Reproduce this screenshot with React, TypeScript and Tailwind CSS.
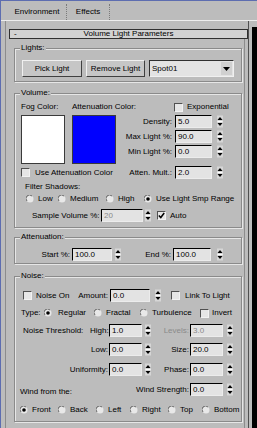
import React from "react";

const Spin = ({ dis = false }: { dis?: boolean }) => (
  <svg width="6" height="13" viewBox="0 0 6 13" className="shrink-0">
    <rect x="0" y="0.5" width="6" height="12" fill="#d6d6d6" />
    <path d="M3 2L5.5 5H0.5Z" fill={dis ? "#555" : "#000"} />
    <path d="M0.5 6.5H5.5" stroke="#fff" strokeWidth="1" />
    <path d="M3 11L5.5 8H0.5Z" fill={dis ? "#555" : "#000"} />
  </svg>
);

const Field = ({ v, w, dis = false }: { v: string; w: string; dis?: boolean }) => (
  <div
    className={`${w} h-[13px] shrink-0 border border-t-black border-l-black border-r-[#ececec] border-b-[#ececec] bg-[#e3e3e3] pl-[2px] leading-[11px] ${
      dis ? "text-[#8a8a8a]" : "text-black"
    }`}
  >
    {v}
  </div>
);

const Check = ({ on = false }: { on?: boolean }) => (
  <div className="w-[9px] h-[9px] shrink-0 border border-t-[#505050] border-l-[#505050] border-r-[#f2f2f2] border-b-[#f2f2f2] bg-[#e6e6e6] flex items-center justify-center">
    {on && (
      <svg width="7" height="7" viewBox="0 0 7 7">
        <path d="M0.8 3.4L2.8 5.5L6.2 1" stroke="#000" strokeWidth="1.5" fill="none" />
      </svg>
    )}
  </div>
);

const Radio = ({ on = false }: { on?: boolean }) => (
  <svg width="8" height="8" viewBox="0 0 8 8" className="shrink-0">
    <circle cx="4" cy="4" r="3.5" fill="#e8e8e8" />
    <path d="M1 6A3.5 3.5 0 0 1 6 1" stroke="#6a6a6a" strokeWidth="1" fill="none" />
    {on && <circle cx="4" cy="4" r="1.8" fill="#000" />}
  </svg>
);

const Group = ({
  label,
  className,
  children,
}: {
  label: string;
  className: string;
  children: React.ReactNode;
}) => (
  <div
    className={`ml-[8px] mr-[2px] border border-[#8a8a8a] shadow-[inset_1px_1px_0_#e6e6e6,1px_1px_0_#e6e6e6] ${className}`}
  >
    <div className="-mt-[6px] ml-[5px] w-fit bg-[#bcbcbc] px-[1px] h-[10px] leading-[10px]">{label}</div>
    {children}
  </div>
);

const Btn = ({ t, w }: { t: string; w: string }) => (
  <div
    className={`${w} h-[17px] shrink-0 flex items-center justify-center border border-t-[#f0f0f0] border-l-[#f0f0f0] border-r-[#404040] border-b-[#404040] bg-[#c6c6c6]`}
  >
    {t}
  </div>
);

const RightNum = ({ label, v, dis = false }: { label: string; v: string; dis?: boolean }) => (
  <div className="flex items-center">
    <span className={`w-[38px] shrink-0 text-right whitespace-nowrap ${dis ? "text-[#8a8a8a]" : ""}`}>{label}</span>
    <div className="ml-[1px]">
      <Field v={v} w="w-[33px]" dis={dis} />
    </div>
    <div className="ml-[4px]">
      <Spin />
    </div>
  </div>
);

const LeftNum = ({ label, v }: { label: string; v: string }) => (
  <div className="flex items-center">
    <span className="w-[93px] shrink-0 text-right">{label}</span>
    <div className="ml-[1px]">
      <Field v={v} w="w-[33px]" />
    </div>
    <div className="ml-[3px]">
      <Spin />
    </div>
  </div>
);

const VolNum = ({ label, v }: { label: string; v: string }) => (
  <div className="flex items-center h-[13px]">
    <span className="w-[49px] shrink-0 text-right whitespace-nowrap">{label}</span>
    <div className="ml-[3px]">
      <Field v={v} w="w-[37px]" />
    </div>
    <div className="ml-[5px]">
      <Spin />
    </div>
  </div>
);

export default function App() {
  return (
    <div className="w-[257px] h-[428px] overflow-hidden bg-[#bcbcbc] border-t border-l border-[#5d6db0] font-['Liberation_Sans',Arial,sans-serif] text-[8px] leading-[10px] text-black">
      {/* tabs */}
      <div className="flex h-[19px] items-end pl-[7px]">
        <div className="w-[59px] h-[16px] flex items-center justify-center border-r border-dotted border-[#7a7a7a]">
          Environment
        </div>
        <div className="w-[43px] h-[16px] flex items-center justify-center border-r border-dotted border-[#7a7a7a]">
          Effects
        </div>
      </div>
      <div className="h-[1px] bg-[#ededed]" />

      <div className="flex">
        <div className="w-[251px]">
          <div className="ml-[4px] w-[244px] h-[407px] border-l border-[#8c8c8c] border-r border-r-[#505050] flex flex-col">
            <div className="ml-[3px] mt-[8px] h-[10px] border border-[#303030] bg-[#d2d2d2] flex items-center">
              <span className="ml-[4px] w-[10px]">-</span>
              <span className="flex-1 text-center pr-[14px]">Volume Light Parameters</span>
            </div>

            <div className="mr-[3px] flex-1 border-r border-[#8c8c8c]">
              {/* Lights */}
              <Group label="Lights:" className="mt-[9px] pb-[4px]">
                <div className="flex mt-[7px] ml-[7px]">
                  <Btn t="Pick Light" w="w-[60px]" />
                  <div className="ml-[4px]">
                    <Btn t="Remove Light" w="w-[59px]" />
                  </div>
                  <div className="ml-[4px] w-[85px] h-[17px] flex items-center border border-t-[#303030] border-l-[#303030] border-r-[#f0f0f0] border-b-[#f0f0f0] bg-[#e3e3e3]">
                    <span className="flex-1 pl-[2px]">Spot01</span>
                    <div className="w-[11px] h-[13px] mr-[1px] flex items-center justify-center bg-[#d0d0d0]">
                      <svg width="7" height="4" viewBox="0 0 7 4">
                        <path d="M0 0H7L3.5 4Z" fill="#000" />
                      </svg>
                    </div>
                  </div>
                </div>
              </Group>

              {/* Volume */}
              <Group label="Volume:" className="mt-[11px] pb-[5px]">
                <div className="flex mt-[4px]">
                  <div className="ml-[6px] w-[102px] shrink-0">
                    <div className="flex h-[10px] items-center">
                      <span className="w-[51px] shrink-0">Fog Color:</span>
                      <span className="whitespace-nowrap">Attenuation Color:</span>
                    </div>
                    <div className="flex mt-[3px]">
                      <div className="w-[44px] h-[49px] shrink-0 bg-white border border-[#3a3a3a]" />
                      <div className="ml-[7px] w-[44px] h-[49px] shrink-0 bg-[#0000ff] border border-[#3a3a3a]" />
                    </div>
                  </div>
                  <div>
                    <div className="flex h-[10px] items-center ml-[51px]">
                      <Check />
                      <span className="ml-[4px]">Exponential</span>
                    </div>
                    <div className="mt-[3px]">
                      <VolNum label="Density:" v="5.0" />
                    </div>
                    <div className="mt-[2px]">
                      <VolNum label="Max Light %:" v="90.0" />
                    </div>
                    <div className="mt-[2px]">
                      <VolNum label="Min Light %:" v="0.0" />
                    </div>
                  </div>
                </div>
                <div className="flex mt-[2px] h-[13px] items-center">
                  <div className="ml-[6px] w-[102px] shrink-0 flex items-center">
                    <Check />
                    <span className="ml-[5px] whitespace-nowrap">Use Attenuation Color</span>
                  </div>
                  <VolNum label="Atten. Mult.:" v="2.0" />
                </div>
                <div className="mt-[3px] h-[10px] ml-[10px]">Filter Shadows:</div>
                <div className="mt-[2px] h-[10px] ml-[11px] flex items-center">
                  <div className="w-[32px] shrink-0 flex items-center">
                    <Radio />
                    <span className="ml-[4px]">Low</span>
                  </div>
                  <div className="w-[48px] shrink-0 flex items-center">
                    <Radio />
                    <span className="ml-[4px]">Medium</span>
                  </div>
                  <div className="w-[38px] shrink-0 flex items-center">
                    <Radio />
                    <span className="ml-[4px]">High</span>
                  </div>
                  <div className="flex items-center">
                    <Radio on />
                    <span className="ml-[4px] whitespace-nowrap">Use Light Smp Range</span>
                  </div>
                </div>
                <div className="mt-[5px] h-[13px] ml-[17px] flex items-center">
                  <span className="w-[68px] shrink-0 whitespace-nowrap">Sample Volume %:</span>
                  <div className="ml-[1px]">
                    <Field v="20" w="w-[42px]" dis />
                  </div>
                  <div className="ml-[2px]">
                    <Spin />
                  </div>
                  <div className="ml-[6px]">
                    <Check on />
                  </div>
                  <span className="ml-[4px]">Auto</span>
                </div>
              </Group>

              {/* Attenuation */}
              <Group label="Attenuation:" className="mt-[9px] pb-[2px]">
                <div className="mt-[6px] h-[13px] flex items-center">
                  <span className="w-[55px] shrink-0 text-right">Start %:</span>
                  <div className="ml-[2px]">
                    <Field v="100.0" w="w-[40px]" />
                  </div>
                  <div className="ml-[3px]">
                    <Spin />
                  </div>
                  <span className="w-[50px] shrink-0 text-right">End %:</span>
                  <div className="ml-[2px]">
                    <Field v="100.0" w="w-[38px]" />
                  </div>
                  <div className="ml-[6px]">
                    <Spin />
                  </div>
                </div>
              </Group>

              {/* Noise */}
              <Group label="Noise:" className="mt-[12px] pb-[6px]">
                <div className="mt-[8px] h-[13px] flex items-center">
                  <div className="ml-[8px]">
                    <Check />
                  </div>
                  <span className="ml-[4px] w-[39px] shrink-0 whitespace-nowrap">Noise On</span>
                  <span className="w-[33px] shrink-0 text-right">Amount:</span>
                  <div className="ml-[2px]">
                    <Field v="0.0" w="w-[40px]" />
                  </div>
                  <div className="ml-[5px]">
                    <Spin />
                  </div>
                  <div className="ml-[10px]">
                    <Check />
                  </div>
                  <span className="ml-[5px] whitespace-nowrap">Link To Light</span>
                </div>
                <div className="mt-[6px] h-[10px] flex items-center">
                  <span className="ml-[6px] w-[23px] shrink-0">Type:</span>
                  <Radio on />
                  <span className="ml-[6px] w-[36px] shrink-0">Regular</span>
                  <Radio />
                  <span className="ml-[4px] w-[34px] shrink-0">Fractal</span>
                  <Radio />
                  <span className="ml-[4px] w-[48px] shrink-0">Turbulence</span>
                  <Check />
                  <span className="ml-[3px]">Invert</span>
                </div>
                <div className="mt-[6px] h-[13px] flex items-center">
                  <span className="ml-[8px] w-[67px] shrink-0 whitespace-nowrap">Noise Threshold:</span>
                  <span className="w-[18px] shrink-0 text-right">High:</span>
                  <div className="ml-[1px]">
                    <Field v="1.0" w="w-[33px]" />
                  </div>
                  <div className="ml-[3px]">
                    <Spin />
                  </div>
                  <RightNum label="Levels:" v="3.0" dis />
                </div>
                <div className="mt-[6px] h-[13px] flex items-center">
                  <LeftNum label="Low:" v="0.0" />
                  <RightNum label="Size:" v="20.0" />
                </div>
                <div className="mt-[7px] h-[13px] flex items-center">
                  <LeftNum label="Uniformity:" v="0.0" />
                  <RightNum label="Phase:" v="0.0" />
                </div>
                <div className="mt-[7px] h-[13px] flex items-center">
                  <span className="ml-[5px] w-[115px] shrink-0 whitespace-nowrap pt-[4px]">Wind from the:</span>
                  <span className="w-[54px] shrink-0 text-right whitespace-nowrap">Wind Strength:</span>
                  <div className="ml-[1px]">
                    <Field v="0.0" w="w-[33px]" />
                  </div>
                  <div className="ml-[4px]">
                    <Spin />
                  </div>
                </div>
                <div className="mt-[9px] h-[10px] ml-[5px] flex items-center">
                  <div className="w-[38px] shrink-0 flex items-center">
                    <Radio on />
                    <span className="ml-[4px]">Front</span>
                  </div>
                  <div className="w-[38px] shrink-0 flex items-center">
                    <Radio />
                    <span className="ml-[4px]">Back</span>
                  </div>
                  <div className="w-[34px] shrink-0 flex items-center">
                    <Radio />
                    <span className="ml-[4px]">Left</span>
                  </div>
                  <div className="w-[38px] shrink-0 flex items-center">
                    <Radio />
                    <span className="ml-[4px]">Right</span>
                  </div>
                  <div className="w-[34px] shrink-0 flex items-center">
                    <Radio />
                    <span className="ml-[4px]">Top</span>
                  </div>
                  <div className="flex items-center">
                    <Radio />
                    <span className="ml-[4px]">Bottom</span>
                  </div>
                </div>
              </Group>
            </div>
          </div>
        </div>
        <div className="w-[5px] h-[407px] mt-[6px] bg-black" />
      </div>
    </div>
  );
}
